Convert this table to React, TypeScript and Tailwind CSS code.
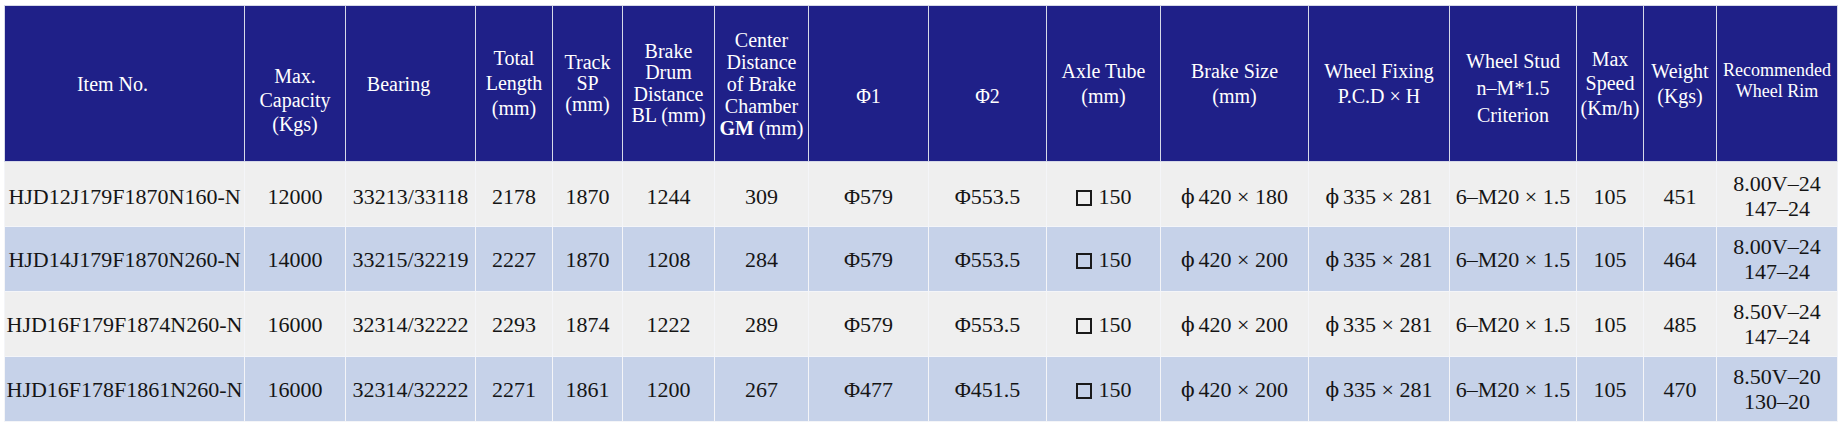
import React from "react";

type Head = { lines: React.ReactNode[]; cls: string };

const widths = [240, 101, 130, 77, 70, 92, 94, 120, 118, 114, 148, 141, 127, 67, 73, 121];

const heads: Head[] = [
  { lines: ["Item No."], cls: "pr-6" },
  { lines: ["Max.", "Capacity", "(Kgs)"], cls: "leading-[24px] pt-[32px]" },
  { lines: ["Bearing"], cls: "pr-6" },
  { lines: ["Total", "Length", "(mm)"], cls: "leading-[25px]" },
  { lines: ["Track", "SP", "(mm)"], cls: "leading-[21px]" },
  { lines: ["Brake", "Drum", "Distance", "BL (mm)"], cls: "leading-[21.5px]" },
  {
    lines: [
      "Center",
      "Distance",
      "of Brake",
      "Chamber",
      <>
        <b>GM</b> (mm)
      </>,
    ],
    cls: "leading-[22px]",
  },
  { lines: ["Φ1"], cls: "pt-[25px]" },
  { lines: ["Φ2"], cls: "pt-[25px]" },
  { lines: ["Axle Tube", "(mm)"], cls: "leading-[25px]" },
  { lines: ["Brake Size", "(mm)"], cls: "leading-[25px]" },
  { lines: ["Wheel Fixing", "P.C.D × H"], cls: "leading-[25px]" },
  { lines: ["Wheel Stud", "n–M*1.5", "Criterion"], cls: "leading-[27px] pt-[9px]" },
  { lines: ["Max", "Speed", "(Km/h)"], cls: "leading-[24.5px]" },
  { lines: ["Weight", "(Kgs)"], cls: "leading-[25px]" },
  { lines: ["Recommended", "Wheel Rim"], cls: "text-[18px] leading-[21px] pb-[6px]" },
];

type Cell = string | string[];

const rows: Cell[][] = [
  ["HJD12J179F1870N160-N", "12000", "33213/33118", "2178", "1870", "1244", "309", "Φ579", "Φ553.5", "□ 150", "ϕ 420 × 180", "ϕ 335 × 281", "6–M20 × 1.5", "105", "451", ["8.00V–24", "147–24"]],
  ["HJD14J179F1870N260-N", "14000", "33215/32219", "2227", "1870", "1208", "284", "Φ579", "Φ553.5", "□ 150", "ϕ 420 × 200", "ϕ 335 × 281", "6–M20 × 1.5", "105", "464", ["8.00V–24", "147–24"]],
  ["HJD16F179F1874N260-N", "16000", "32314/32222", "2293", "1874", "1222", "289", "Φ579", "Φ553.5", "□ 150", "ϕ 420 × 200", "ϕ 335 × 281", "6–M20 × 1.5", "105", "485", ["8.50V–24", "147–24"]],
  ["HJD16F178F1861N260-N", "16000", "32314/32222", "2271", "1861", "1200", "267", "Φ477", "Φ451.5", "□ 150", "ϕ 420 × 200", "ϕ 335 × 281", "6–M20 × 1.5", "105", "470", ["8.50V–20", "130–20"]],
];

function renderCell(c: Cell) {
  if (Array.isArray(c)) {
    return (
      <div className="leading-[25.5px]">
        {c.map((l, i) => (
          <div key={i}>{l}</div>
        ))}
      </div>
    );
  }
  if (c.startsWith("□")) {
    return (
      <span>
        <span className="inline-block w-[16px] h-[16px] border-2 border-[#1a1a1a] align-[-2px] mr-[7px]" aria-label="□"></span>
        {c.slice(2)}
      </span>
    );
  }
  if (c.startsWith("ϕ")) {
    return (
      <span>
        <span className="font-['DejaVu_Serif',serif] text-[20px] mr-[4px]">ϕ</span>
        {c.slice(2)}
      </span>
    );
  }
  return c;
}

export default function App() {
  return (
    <div className="bg-white w-[1842px] h-[433px] pt-[5px] pl-[4px] font-['Liberation_Serif','Times_New_Roman',serif]">
      <table className="table-fixed border-collapse w-[1833px]">
        <colgroup>
          {widths.map((w, i) => (
            <col key={i} style={{ width: w }} />
          ))}
        </colgroup>
        <thead>
          <tr className="h-[156px] bg-[#1f2088] text-white text-[20px]">
            {heads.map((h, i) => (
              <th key={i} className={`border border-[#d6d9e8] p-0 font-normal text-center align-middle ${h.cls}`}>
                {h.lines.map((l, j) => (
                  <div key={j} className="whitespace-nowrap">
                    {l}
                  </div>
                ))}
              </th>
            ))}
          </tr>
        </thead>
        <tbody>
          {rows.map((r, ri) => (
            <tr key={ri} className={`h-[65px] ${ri % 2 === 0 ? "bg-[#efefef]" : "bg-[#c6d2e9]"} text-[#151515] text-[22px]`}>
              {r.map((c, ci) => (
                <td
                  key={ci}
                  className={`border border-[#f4f5f8] p-0 text-center align-middle whitespace-nowrap ${ri === 0 ? "pt-[4px]" : ""}`}
                >
                  {renderCell(c)}
                </td>
              ))}
            </tr>
          ))}
        </tbody>
      </table>
    </div>
  );
}
